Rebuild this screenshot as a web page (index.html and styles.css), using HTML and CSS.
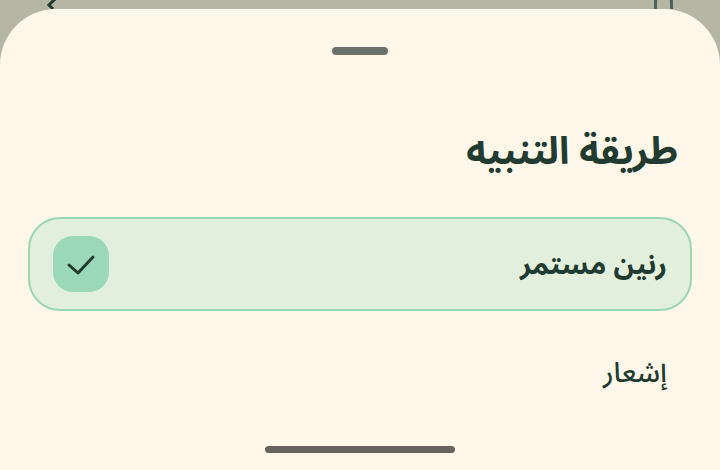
FILE: index.html
```html
<!DOCTYPE html>
<html lang="ar" dir="rtl">
<head>
    <meta charset="UTF-8">
    <meta name="viewport" content="width=device-width, initial-scale=1.0">
    <title>طريقة التنبيه</title>
    <link rel="stylesheet" href="styles.css">
</head>
<body>

    <header class="topbar">
        <svg class="topbar-icon" viewBox="0 0 24 9" aria-hidden="true">
            <path d="M3.5 9V2Q3.5 0 4.5 -2M19.5 9V2Q19.5 0 18.5 -2"/>
        </svg>
        <svg class="topbar-icon back" viewBox="0 0 24 9" aria-hidden="true">
            <path d="M12 -2L5 5L9 9"/>
        </svg>
    </header>

    <main class="sheet">
        <div class="handle"></div>
        <h1 class="title" id="title">طريقة التنبيه</h1>

        <form class="options" role="radiogroup" aria-labelledby="title">
            <label class="option">
                <span class="option-text">رنين مستمر</span>
                <span class="check">
                    <input type="radio" name="alert" value="ring" checked>
                    <svg viewBox="0 0 56 56" aria-hidden="true">
                        <path d="M16 29L25 37L40 21"/>
                    </svg>
                </span>
            </label>
            <label class="option">
                <span class="option-text">إشعار</span>
                <span class="check">
                    <input type="radio" name="alert" value="notification">
                    <svg viewBox="0 0 56 56" aria-hidden="true">
                        <path d="M16 29L25 37L40 21"/>
                    </svg>
                </span>
            </label>
        </form>

        <div class="home-bar"></div>
    </main>

</body>
</html>
```

FILE: styles.css
```css
* {
    box-sizing: border-box;
}

body {
    display: flex;
    flex-direction: column;
    min-height: 100vh;
    margin: 0;
    background-color: #b5b6a3;
    color: #213b30;
    font-family: "Noto Sans Arabic", "Noto Sans", "DejaVu Sans", sans-serif;
}

.topbar {
    display: flex;
    justify-content: space-between;
    padding: 0 44px;
}

.topbar-icon {
    width: 24px;
    height: 9px;
    fill: none;
    stroke: #4b635c;
    stroke-width: 3;
}

.back {
    stroke: #213b30;
}

.sheet {
    flex: 1;
    display: flex;
    flex-direction: column;
    padding: 38px 28px 17px;
    border-radius: 56px 56px 0 0;
    background-color: #fff8ea;
}

.handle {
    align-self: center;
    width: 56px;
    height: 8px;
    border-radius: 4px;
    background-color: #6b7269;
}

.title {
    margin: 65px 0 33px;
    padding: 0 14px;
    font-size: 38px;
    line-height: 64px;
    font-weight: bold;
}

.options {
    display: flex;
    flex-direction: column;
    gap: 14px;
}

.option {
    display: flex;
    align-items: center;
    justify-content: space-between;
    height: 94px;
    padding: 0 23px;
    border: 2px solid transparent;
    border-radius: 32px;
    font-size: 28px;
    line-height: 40px;
    font-weight: 500;
}

.option:has(input:checked) {
    border-color: #9ad7b5;
    background-color: #e3efdd;
    font-weight: bold;
}

.option-text {
    padding-top: 3px;
}

.check {
    display: grid;
    width: 56px;
    height: 56px;
}

.check input,
.check svg {
    grid-area: 1 / 1;
    width: 100%;
    height: 100%;
}

.check input {
    appearance: none;
    margin: 0;
    border-radius: 20px;
}

.check input:checked {
    background-color: #9bd8b7;
}

.check svg {
    z-index: 1;
    fill: none;
    stroke: #213b30;
    stroke-width: 3;
    stroke-linecap: round;
    stroke-linejoin: round;
    visibility: hidden;
}

.check input:checked + svg {
    visibility: visible;
}

.home-bar {
    align-self: center;
    width: 190px;
    height: 7px;
    margin-top: auto;
    border-radius: 4px;
    background-color: #67655d;
}
```
